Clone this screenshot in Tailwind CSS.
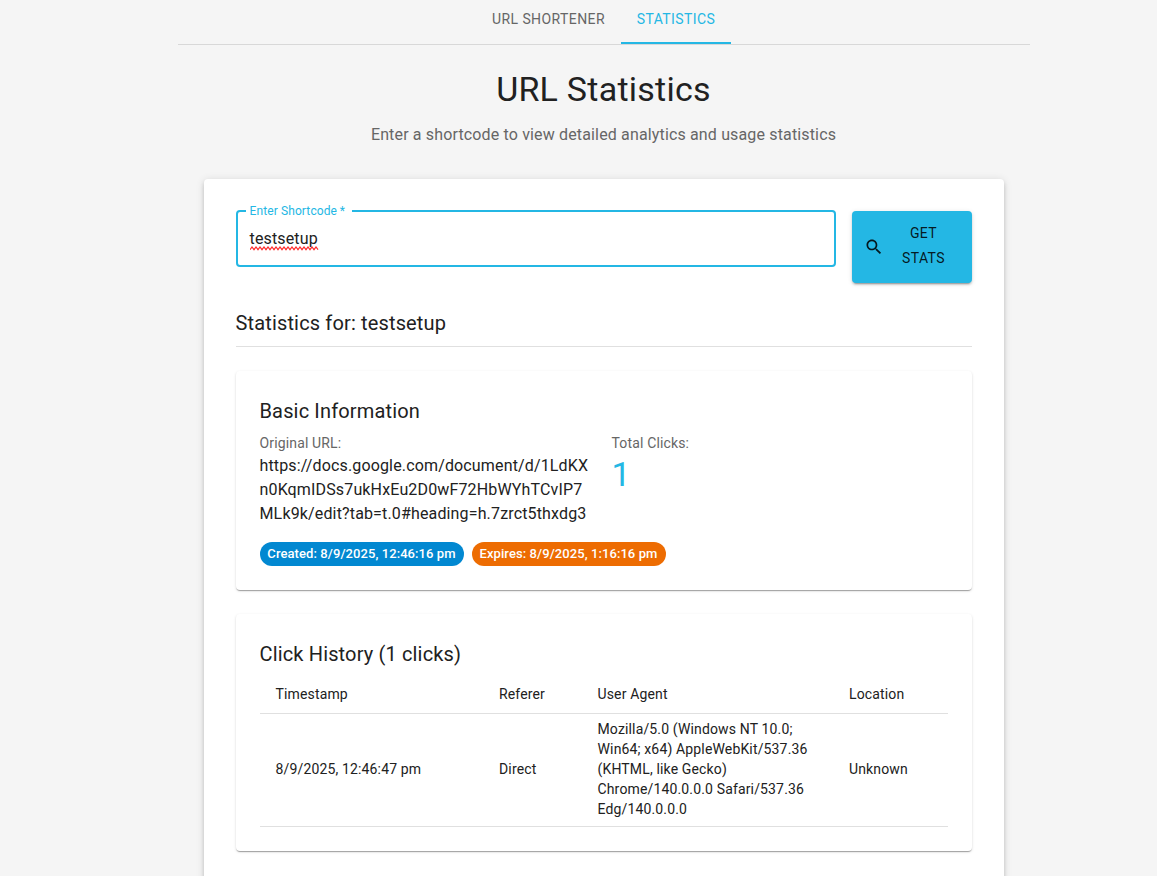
<!DOCTYPE html>
<html lang="en">
<head>
<meta charset="utf-8">
<title>URL Statistics</title>
<script src="https://cdn.jsdelivr.net/npm/@tailwindcss/browser@4"></script>
</head>
<body class="h-[876px] overflow-hidden bg-[#f5f5f5] font-[Roboto,sans-serif] text-[#212121]">
<main class="ml-[177.5px] h-[876px] w-[852px]">
  <nav class="flex h-[45px] justify-center border-b border-[#d8d8d8] text-sm leading-[17.5px] tracking-[0.02857em]">
    <a class="flex w-[145px] items-end justify-center pb-[15.25px] text-[#666]">URL SHORTENER</a>
    <a class="flex w-[110px] items-end justify-center border-b-2 border-[#24b7e4] pb-[13.25px] text-[#24b7e4]">STATISTICS</a>
  </nav>
  <header class="mt-[23px] text-center">
    <h1 class="text-[34px] leading-[42px] tracking-[0.00735em]">URL Statistics</h1>
    <p class="mt-[13px] text-base leading-6 tracking-[0.00938em] text-[#666]">Enter a shortcode to view detailed analytics and usage statistics</p>
  </header>
  <section class="mx-auto mt-8 h-[760px] w-[800px] rounded bg-white p-8 shadow-[0_3px_3px_-2px_rgba(0,0,0,0.2),0_3px_4px_0_rgba(0,0,0,0.14),0_1px_8px_0_rgba(0,0,0,0.12)]">
    <form class="flex items-start gap-4">
      <div class="relative -mt-px flex h-[57px] w-[600px] items-center rounded border-2 border-[#24b7e4] px-3">
        <label class="absolute -top-[9px] left-2 h-4 w-[106px] bg-white pl-1 text-xs leading-4 tracking-[0.00938em] text-[#24b7e4]">Enter Shortcode&#8201;*</label>
        <span class="relative text-base leading-6 tracking-[0.00938em]">testsetup
          <svg class="absolute top-[19px] left-0" width="69" height="5" viewBox="0 0 69 5" fill="none" stroke="#ff2a2a" stroke-width="1.2"><path d="M0 3.7l2-2.7 2 2.7 2-2.7 2 2.7 2-2.7 2 2.7 2-2.7 2 2.7 2-2.7 2 2.7 2-2.7 2 2.7 2-2.7 2 2.7 2-2.7 2 2.7 2-2.7 2 2.7 2-2.7 2 2.7 2-2.7 2 2.7 2-2.7 2 2.7 2-2.7 2 2.7 2-2.7 2 2.7 2-2.7 2 2.7 2-2.7 2 2.7 2-2.7 2 2.7"/></svg>
        </span>
      </div>
      <button type="button" class="flex h-[72px] w-[120px] items-center gap-2 rounded bg-[#24b7e4] pr-4 pl-3 text-sm leading-[24.5px] tracking-[0.02857em] text-black/87 shadow-[0_3px_1px_-2px_rgba(0,0,0,0.2),0_2px_2px_0_rgba(0,0,0,0.14),0_1px_5px_0_rgba(0,0,0,0.12)]">
        <svg class="size-5 shrink-0" viewBox="0 0 24 24" fill="currentColor"><path d="M15.5 14h-.79l-.28-.27C15.41 12.59 16 11.11 16 9.5 16 5.91 13.09 3 9.5 3S3 5.91 3 9.5 5.91 16 9.5 16c1.61 0 3.09-.59 4.23-1.57l.27.28v.79l5 4.99L20.49 19zm-6 0C7.01 14 5 11.99 5 9.5S7.01 5 9.5 5 14 7.01 14 9.5 11.99 14 9.5 14"/></svg>
        <span class="flex-1 pb-[3px] text-center">GET<br>STATS</span>
      </button>
    </form>
    <h2 class="mt-6 border-b border-[#e0e0e0] pb-[7px] text-xl leading-8 tracking-[0.0075em]">Statistics for: testsetup</h2>
    <article class="mt-6 rounded bg-white p-6 shadow-[0_2px_1px_-1px_rgba(0,0,0,0.2),0_1px_1px_0_rgba(0,0,0,0.14),0_1px_3px_0_rgba(0,0,0,0.12)]">
      <h3 class="text-xl leading-8 tracking-[0.0075em]">Basic Information</h3>
      <div class="mt-1.5 grid grid-cols-2 gap-4">
        <div>
          <p class="text-sm leading-5 tracking-[0.01071em] text-[#666]">Original URL:</p>
          <p class="mt-px text-base leading-6 tracking-[0.00938em]">https://docs.google.com/document/d/1LdKX<br>n0KqmIDSs7ukHxEu2D0wF72HbWYhTCvIP7<br>MLk9k/edit?tab=t.0#heading=h.7zrct5thxdg3</p>
        </div>
        <div>
          <p class="text-sm leading-5 tracking-[0.01071em] text-[#666]">Total Clicks:</p>
          <p class="text-[34px] leading-[42px] tracking-[0.00735em] text-[#24b7e4]">1</p>
        </div>
      </div>
      <div class="mt-4 flex gap-2 text-[13px] leading-6 font-medium tracking-[0.08px] text-white">
        <span class="w-[204px] rounded-full bg-[#0288d1] text-center whitespace-nowrap">Created: 8/9/2025, 12:46:16 pm</span>
        <span class="w-[194px] rounded-full bg-[#ed6c02] text-center whitespace-nowrap">Expires: 8/9/2025, 1:16:16 pm</span>
      </div>
    </article>
    <article class="mt-6 rounded bg-white p-6 shadow-[0_2px_1px_-1px_rgba(0,0,0,0.2),0_1px_1px_0_rgba(0,0,0,0.14),0_1px_3px_0_rgba(0,0,0,0.12)]">
      <h3 class="text-xl leading-8 tracking-[0.0075em]">Click History (1 clicks)</h3>
      <table class="mt-1.5 w-full table-fixed text-left text-sm tracking-[0.01071em]">
        <colgroup><col class="w-[223.5px]"><col class="w-[98.5px]"><col class="w-[251.5px]"><col></colgroup>
        <thead>
          <tr class="h-[37px] border-b border-[#e0e0e0] leading-6">
            <th class="px-4 font-normal">Timestamp</th><th class="px-4 font-normal">Referer</th><th class="px-4 font-normal">User Agent</th><th class="px-4 font-normal">Location</th>
          </tr>
        </thead>
        <tbody>
          <tr class="border-b border-[#e0e0e0] leading-5">
            <td class="px-4 pt-[5px] pb-[7px]">8/9/2025, 12:46:47 pm</td>
            <td class="px-4 pt-[5px] pb-[7px]">Direct</td>
            <td class="px-4 pt-[5px] pb-[7px] whitespace-nowrap">Mozilla/5.0 (Windows NT 10.0;<br>Win64; x64) AppleWebKit/537.36<br>(KHTML, like Gecko)<br>Chrome/140.0.0.0 Safari/537.36<br>Edg/140.0.0.0</td>
            <td class="px-4 pt-[5px] pb-[7px]">Unknown</td>
          </tr>
        </tbody>
      </table>
    </article>
  </section>
</main>
</body>
</html>
